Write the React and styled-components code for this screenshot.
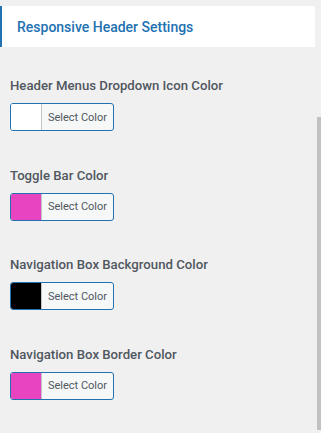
import React from 'react';
import styled, { createGlobalStyle } from 'styled-components';

const GlobalStyle = createGlobalStyle`
  html, body {
    margin: 0;
    padding: 0;
    background: #f0f0f1;
    font-family: Roboto, "Liberation Sans", sans-serif;
  }
`;

const settings = [
  { label: 'Header Menus Dropdown Icon Color', color: '#ffffff' },
  { label: 'Toggle Bar Color', color: '#e843c0' },
  { label: 'Navigation Box Background Color', color: '#000000' },
  { label: 'Navigation Box Border Color', color: '#e843c0' },
];

const App = () => {
  return (
    <Page>
      <GlobalStyle />
      <Header>
        <Title>Responsive Header Settings</Title>
      </Header>
      <List>
        {settings.map((item) => (
          <Section key={item.label}>
            <Label>{item.label}</Label>
            <ColorButton type="button">
              <Swatch $color={item.color} />
              <ButtonText>Select Color</ButtonText>
            </ColorButton>
          </Section>
        ))}
      </List>
      <ScrollThumb />
    </Page>
  );
};

export default App;

const Page = styled.div`
  position: relative;
  width: 321px;
  height: 433px;
  overflow: hidden;
  padding-top: 6px;
  box-sizing: border-box;
`;

const Header = styled.div`
  width: 315px;
  height: 41px;
  box-sizing: border-box;
  background: #ffffff;
  border-left: 2px solid #2271b1;
  display: flex;
  align-items: center;
  padding-left: 15px;
`;

const Title = styled.h2`
  margin: 0;
  font-size: 14px;
  font-weight: 500;
  color: #2271b1;
`;

const List = styled.div`
  display: flex;
  flex-direction: column;
  padding: 28px 10px 0;
`;

const Section = styled.div`
  display: flex;
  flex-direction: column;
  align-items: flex-start;
  gap: 6px;
  margin-bottom: 33.5px;
`;

const Label = styled.div`
  font-size: 13.2px;
  line-height: 22px;
  font-weight: 500;
  color: #50575e;
`;

const ColorButton = styled.button`
  display: flex;
  width: 104px;
  height: 28px;
  padding: 0;
  border: 1px solid #2271b1;
  border-radius: 3px;
  background: #f6f7f7;
  overflow: hidden;
  cursor: pointer;
`;

const Swatch = styled.span`
  width: 30px;
  height: 100%;
  background: ${(p) => p.$color};
  border-right: 1px solid #c3c4c7;
`;

const ButtonText = styled.span`
  flex: 1;
  display: flex;
  align-items: center;
  justify-content: center;
  font-family: Roboto, "Liberation Sans", sans-serif;
  font-size: 11px;
  color: #50575e;
`;

const ScrollThumb = styled.div`
  position: absolute;
  right: 0;
  top: 117px;
  width: 4px;
  height: 313px;
  background: #c1c1c1;
`;
